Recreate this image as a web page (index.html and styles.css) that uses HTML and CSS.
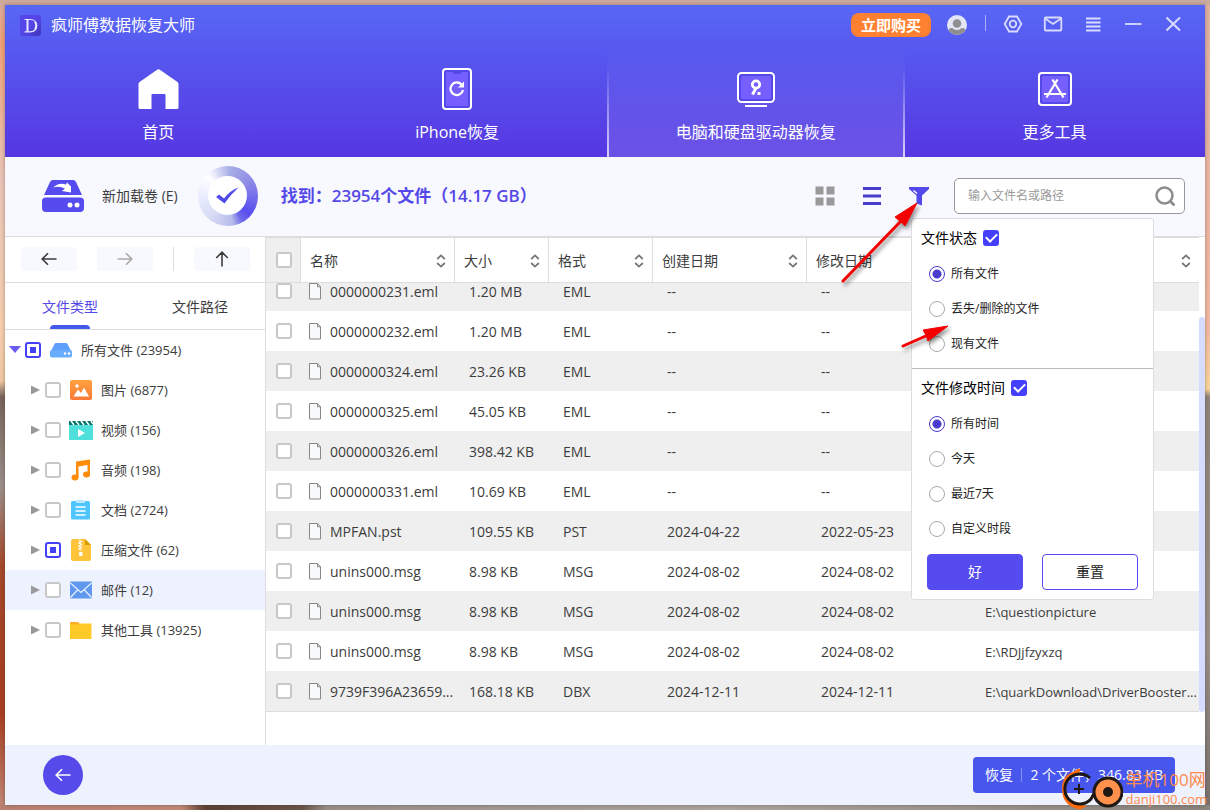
FILE: index.html
```html
<!DOCTYPE html>
<html lang="zh-CN">
<head>
<meta charset="utf-8">
<meta name="viewport" content="width=device-width, initial-scale=1">
<title>疯师傅数据恢复大师</title>
<link rel="stylesheet" href="styles.css">
</head>
<body>
<svg class="defs" aria-hidden="true">
  <symbol id="sort" viewBox="0 0 10 14"><path d="M1.2 5 5 1.4 8.8 5M1.2 9 5 12.6 8.8 9" fill="none" stroke="#777" stroke-width="1.8"/></symbol>
  <symbol id="file" viewBox="0 0 12 17"><path d="M.5.5H8.5L11.5 3.8V16H.5Z" fill="#f8f9fb" stroke="#888"/><path d="M8.5.5V3.8H11.5" fill="none" stroke="#888"/></symbol>
  <symbol id="arrow" viewBox="0 0 16 14"><path d="M15.5 7H1.5M7 1.2 1.2 7 7 12.8" fill="none" stroke="currentColor" stroke-width="1.6"/></symbol>
</svg>
<div class="window">
  <header class="header">
    <div class="titlebar">
      <svg class="logo" viewBox="0 0 21 21"><defs><linearGradient id="lg" x1="0" y1="0" x2="1" y2="1"><stop offset=".5" stop-color="#5546ea"/><stop offset="1" stop-color="#4034b4"/></linearGradient></defs><rect width="21" height="21" rx="3" fill="url(#lg)"/><path d="M4.500 4.500H10C14.500 4.500 16.500 7 16.500 10.500S14.500 16.800 10 16.800H4.500" fill="none" stroke="#e9e6ff" stroke-width="1.200"/><path d="M7.500 4.500V16.800M15 7Q17.500 10.500 15 14.500" fill="none" stroke="#e9e6ff" stroke-width="2"/></svg>
      <h1 class="app-name">疯师傅数据恢复大师</h1>
      <button class="buy">立即购买</button>
      <button class="avatar" aria-label="账户"><svg viewBox="0 0 20 20"><defs><clipPath id="ac"><circle cx="10" cy="10" r="10"/></clipPath></defs><g clip-path="url(#ac)"><rect width="20" height="20" fill="#e3e6f6"/><circle cx="10" cy="8.500" r="4.300" fill="#8f8f91"/><path d="M0 20C1 13 4 12.500 6 13.500Q10 16.500 14 13.500C16 12.500 19 13 20 20Z" fill="#8f8f91"/></g></svg></button>
      <span class="title-sep"></span>
      <div class="win-tools">
        <button aria-label="设置"><svg viewBox="0 0 24 24"><path d="M8 4.500H16L20.300 12 16 19.500H8L3.700 12Z"/><circle cx="12" cy="12" r="3.300"/></svg></button>
        <button aria-label="邮件"><svg viewBox="0 0 24 24"><rect x="3.800" y="5.500" width="16.500" height="13" rx="1"/><path d="M4 6.500 12 12 20 6.500"/></svg></button>
        <button aria-label="菜单"><svg viewBox="0 0 24 24"><path d="M5 6.500H19.500M5 10.500H19.500M5 14.500H19.500M5 18.500H19.500"/></svg></button>
        <button aria-label="最小化"><svg viewBox="0 0 24 24"><path d="M4 12H20.500"/></svg></button>
        <button aria-label="关闭"><svg viewBox="0 0 24 24"><path d="M5.500 5.500 19 18.500M19 5.500 5.500 18.500" stroke-width="2"/></svg></button>
      </div>
    </div>
    <nav class="main-tabs">
      <a class="main-tab" href="#"><span class="tab-icon"><svg width="42" height="42" viewBox="0 0 42 42"><path d="M20.500 1.500Q21.500.8 22.500 1.500L40.500 14Q41.500 15 41.500 16V39.500Q41.500 41 40 41H28.500V27Q28.500 26 27.500 26H15.500Q14.500 26 14.500 27V41H3Q1.500 41 1.500 39.500V16Q1.500 15 2.500 14Z" fill="#fff"/></svg></span>首页</a>
      <a class="main-tab" href="#"><span class="tab-icon"><svg width="30" height="42" viewBox="0 0 30 42"><rect x="1" y="1" width="28" height="40" rx="3" fill="#5548e8" stroke="#fff" stroke-width="2"/><path d="M4 4H10L12 6H18L20 4H26V38H4Z" fill="#765fff"/><path d="M19.500 16.500A6.300 6.300 0 1 0 21 22" fill="none" stroke="#fff" stroke-width="2.200"/><path d="M22 13.500V19.500H16Z" fill="#fff"/></svg></span>iPhone恢复</a>
      <a class="main-tab active" href="#"><span class="tab-icon"><svg width="38" height="35" viewBox="0 0 38 35"><rect x="1" y="1" width="36" height="29" rx="3.500" fill="#5548e8" stroke="#fff" stroke-width="2"/><rect x="4" y="4" width="30" height="23" rx="1" fill="#765fff"/><circle cx="19" cy="12.500" r="3.700" fill="none" stroke="#fff" stroke-width="2.800"/><path d="M19 16 15.500 22.500" stroke="#fff" stroke-width="3"/><rect x="20.500" y="20" width="3" height="3" fill="#fff"/><path d="M8 34H30" stroke="#fff" stroke-width="2"/></svg></span>电脑和硬盘驱动器恢复</a>
      <a class="main-tab" href="#"><span class="tab-icon"><svg width="34" height="34" viewBox="0 0 34 34"><rect x="1" y="1" width="32" height="32" rx="3" fill="#5548e8" stroke="#fff" stroke-width="2"/><rect x="4" y="4" width="26" height="26" rx="1" fill="#765fff"/><path d="M14.500 7.500 25.500 25.500M19.500 7.500 8.500 25.500M6 22H28" fill="none" stroke="#fff" stroke-width="2.200"/></svg></span>更多工具</a>
    </nav>
  </header>

  <section class="toolbar">
    <svg class="drive" viewBox="0 0 42 32"><path d="M11 0H31Q33 0 34 2L40 15H2L8 2Q9 0 11 0ZM4 17.500H38Q42 17.500 42 21V28Q42 32 38 32H4Q0 32 0 28V21Q0 17.500 4 17.500Z" fill="#564bee"/><path d="M11 7.500Q17 2 24 4.500L25 2.500 29 6.500V12.500L20 11 23 8.500Q17 5.500 11 7.500Z" fill="#fff"/><circle cx="28" cy="25" r="2.500" fill="#fff"/><circle cx="35" cy="25" r="2.500" fill="#fff"/></svg>
    <span class="drive-name">新加载卷 (E)</span>
    <div class="ring"><svg viewBox="0 0 39 39"><circle cx="19.500" cy="19.500" r="19.500" fill="#fff"/><path d="M8 21 11 18.500 16 22.500Q22 14.500 30.500 11.500Q22 19 16.500 27.500Z" fill="#5149ea"/></svg></div>
    <strong class="found">找到：23954个文件（14.17 GB）</strong>
    <div class="views">
      <button aria-label="网格视图"><svg viewBox="0 0 20 20"><path d="M.5.5h8v8h-8zM11.500.5h8v8h-8zM.5 11.500h8v8h-8zM11.500 11.500h8v8h-8z" fill="#999"/></svg></button>
      <button aria-label="列表视图"><svg viewBox="0 0 20 20"><path d="M1 2.500H19M1 10H19M1 17.500H19" stroke="#4a3ccc" stroke-width="3"/></svg></button>
      <button aria-label="筛选"><svg viewBox="0 0 20 20"><path d="M0 1H20V3L13 9.500V19.500L7.500 17.500V9.500L0 3Z" fill="#5349e8"/><path d="M4.500 4.500 8 7.500" stroke="#fff" stroke-width="1.400"/></svg></button>
    </div>
    <label class="search"><input type="search" aria-label="搜索" placeholder="输入文件名或路径"><svg viewBox="0 0 20 20"><circle cx="9.500" cy="9.500" r="8" fill="none" stroke="#8c8c8c" stroke-width="2.500"/><path d="M15 15 19.500 19.500" stroke="#8c8c8c" stroke-width="2.800"/></svg></label>
  </section>

  <main class="content">
    <aside class="sidebar">
      <div class="history">
        <button aria-label="后退"><svg width="16" height="14"><use href="#arrow"/></svg></button>
        <button class="faded" aria-label="前进"><svg class="right" width="16" height="14"><use href="#arrow"/></svg></button>
        <span class="history-sep"></span>
        <button aria-label="向上"><svg class="up" width="16" height="14"><use href="#arrow"/></svg></button>
      </div>
      <div class="side-tabs" role="tablist">
        <button class="side-tab on" role="tab" aria-selected="true">文件类型</button>
        <button class="side-tab" role="tab" aria-selected="false">文件路径</button>
      </div>
      <ul class="tree">
        <li class="node root"><svg class="caret" viewBox="0 0 12 12"><path d="M0 2H12L6 9Z" fill="#6a5cf2"/></svg><input class="check partial" type="checkbox" id="t0"><svg class="kind" viewBox="0 0 24 24"><path d="M7 5H17Q18 5 18.500 6L22 13H2L5.500 6Q6 5 7 5Z" fill="#5d9ffb"/><rect x="1" y="12" width="22" height="7.500" rx="2" fill="#69adff"/><circle cx="16" cy="15.500" r="1.200" fill="#fff"/><circle cx="20" cy="15.500" r="1.200" fill="#fff"/></svg><label for="t0">所有文件 (23954)</label></li>
        <li class="node"><svg class="caret" viewBox="0 0 12 12"><path d="M2 1.500V10.500L11 6Z" fill="#999"/></svg><input class="check" type="checkbox" id="t1"><svg class="kind" viewBox="0 0 24 24"><defs><linearGradient id="og" x2="0" y2="1"><stop stop-color="#ffa23f"/><stop offset="1" stop-color="#f87838"/></linearGradient></defs><rect x="1" y="2" width="22" height="20" rx="2" fill="url(#og)"/><path d="M4.500 18.500 9 11.500 12 15 15 9.500 20 18.500Z" fill="#fff"/><circle cx="8" cy="8" r="1.700" fill="#fff"/></svg><label for="t1">图片 (6877)</label></li>
        <li class="node"><svg class="caret" viewBox="0 0 12 12"><path d="M2 1.500V10.500L11 6Z" fill="#999"/></svg><input class="check" type="checkbox" id="t2"><svg class="kind" viewBox="0 0 24 24"><rect y="3" width="24" height="19" rx="1" fill="#50e0dc"/><path d="M0 3H24V7H0Z" fill="#08756f"/><path d="M2 3 5 7M7 3 10 7M12 3 15 7M17 3 20 7M22 3 24 6" stroke="#fff" stroke-width="1.500"/><path d="M9 11V19L16 15Z" fill="#fff"/></svg><label for="t2">视频 (156)</label></li>
        <li class="node"><svg class="caret" viewBox="0 0 12 12"><path d="M2 1.500V10.500L11 6Z" fill="#999"/></svg><input class="check" type="checkbox" id="t3"><svg class="kind" viewBox="0 0 24 24"><path d="M7 3.500 21 1.500V16.500H18.500V7L9.500 8.500V19.500H7Z" fill="#ff8c0a"/><ellipse cx="6" cy="19.500" rx="3.500" ry="3" fill="#ff8c0a"/><ellipse cx="17.500" cy="16.500" rx="3.500" ry="3" fill="#ff8c0a"/></svg><label for="t3">音频 (198)</label></li>
        <li class="node"><svg class="caret" viewBox="0 0 12 12"><path d="M2 1.500V10.500L11 6Z" fill="#999"/></svg><input class="check" type="checkbox" id="t4"><svg class="kind" viewBox="0 0 24 24"><rect x="2" y="3" width="19" height="18.500" rx="1.500" fill="#4fc5ff"/><rect x="7" y="2" width="9" height="3" rx="1" fill="#bce9ff"/><path d="M6.500 9H16.500M6.500 13H16.500M6.500 17H16.500" stroke="#fff" stroke-width="1.600"/></svg><label for="t4">文档 (2724)</label></li>
        <li class="node"><svg class="caret" viewBox="0 0 12 12"><path d="M2 1.500V10.500L11 6Z" fill="#999"/></svg><input class="check partial" type="checkbox" id="t5"><svg class="kind" viewBox="0 0 24 24"><path d="M4 1H16L22 7V21Q22 23 20 23H4Q2 23 2 21V3Q2 1 4 1Z" fill="#ffc43a"/><path d="M16 1 22 7H16Z" fill="#d99a00"/><path d="M10 2 12.500 3.500 10 5 12.500 6.500 10 8 12.500 9.500 10 11 12.500 12.500" fill="none" stroke="#fff" stroke-width="1.300"/><rect x="10" y="14" width="3.500" height="4" rx="1" fill="#fff"/></svg><label for="t5">压缩文件 (62)</label></li>
        <li class="node picked"><svg class="caret" viewBox="0 0 12 12"><path d="M2 1.500V10.500L11 6Z" fill="#999"/></svg><input class="check" type="checkbox" id="t6"><svg class="kind" viewBox="0 0 24 24"><rect x="1" y="3.500" width="22" height="17" rx="1" fill="#5f98ee"/><path d="M1.500 5 12 14.500 22.500 5M1.500 19.500 8.500 12M22.500 19.500 15.500 12" fill="none" stroke="#e8f0ff" stroke-width="1.200"/></svg><label for="t6">邮件 (12)</label></li>
        <li class="node"><svg class="caret" viewBox="0 0 12 12"><path d="M2 1.500V10.500L11 6Z" fill="#999"/></svg><input class="check" type="checkbox" id="t7"><svg class="kind" viewBox="0 0 24 24"><path d="M1 4H9L12 7V10H1Z" fill="#ffac26"/><path d="M1 6.500H9.500L11 5.500H22.500V21H1Z" fill="#ffca28"/></svg><label for="t7">其他工具 (13925)</label></li>
      </ul>
    </aside>

    <div class="list">
      <table class="files">
        <colgroup><col class="c-check"><col class="c-name"><col class="c-size"><col class="c-type"><col class="c-date"><col class="c-mod"><col></colgroup>
        <thead><tr>
          <th class="pick"><input class="check" type="checkbox" aria-label="全选"></th>
          <th><span class="head">名称<svg><use href="#sort"/></svg></span></th>
          <th><span class="head">大小<svg><use href="#sort"/></svg></span></th>
          <th><span class="head">格式<svg><use href="#sort"/></svg></span></th>
          <th><span class="head">创建日期<svg><use href="#sort"/></svg></span></th>
          <th><span class="head">修改日期<svg><use href="#sort"/></svg></span></th>
          <th aria-label="路径"><span class="head end"><svg><use href="#sort"/></svg></span></th>
        </tr></thead>
        <tbody>
          <tr class="cut"><td class="pick"><input class="check" type="checkbox" aria-label="0000000231.eml"></td><td class="name"><svg><use href="#file"/></svg>0000000231.eml</td><td>1.20 MB</td><td>EML</td><td>--</td><td>--</td><td class="path"></td></tr>
          <tr><td class="pick"><input class="check" type="checkbox" aria-label="0000000232.eml"></td><td class="name"><svg><use href="#file"/></svg>0000000232.eml</td><td>1.20 MB</td><td>EML</td><td>--</td><td>--</td><td class="path"></td></tr>
          <tr><td class="pick"><input class="check" type="checkbox" aria-label="0000000324.eml"></td><td class="name"><svg><use href="#file"/></svg>0000000324.eml</td><td>23.26 KB</td><td>EML</td><td>--</td><td>--</td><td class="path"></td></tr>
          <tr><td class="pick"><input class="check" type="checkbox" aria-label="0000000325.eml"></td><td class="name"><svg><use href="#file"/></svg>0000000325.eml</td><td>45.05 KB</td><td>EML</td><td>--</td><td>--</td><td class="path"></td></tr>
          <tr><td class="pick"><input class="check" type="checkbox" aria-label="0000000326.eml"></td><td class="name"><svg><use href="#file"/></svg>0000000326.eml</td><td>398.42 KB</td><td>EML</td><td>--</td><td>--</td><td class="path"></td></tr>
          <tr><td class="pick"><input class="check" type="checkbox" aria-label="0000000331.eml"></td><td class="name"><svg><use href="#file"/></svg>0000000331.eml</td><td>10.69 KB</td><td>EML</td><td>--</td><td>--</td><td class="path"></td></tr>
          <tr><td class="pick"><input class="check" type="checkbox" aria-label="MPFAN.pst"></td><td class="name"><svg><use href="#file"/></svg>MPFAN.pst</td><td>109.55 KB</td><td>PST</td><td>2024-04-22</td><td>2022-05-23</td><td class="path"></td></tr>
          <tr><td class="pick"><input class="check" type="checkbox" aria-label="unins000.msg"></td><td class="name"><svg><use href="#file"/></svg>unins000.msg</td><td>8.98 KB</td><td>MSG</td><td>2024-08-02</td><td>2024-08-02</td><td class="path"></td></tr>
          <tr><td class="pick"><input class="check" type="checkbox" aria-label="unins000.msg"></td><td class="name"><svg><use href="#file"/></svg>unins000.msg</td><td>8.98 KB</td><td>MSG</td><td>2024-08-02</td><td>2024-08-02</td><td class="path">E:\questionpicture</td></tr>
          <tr><td class="pick"><input class="check" type="checkbox" aria-label="unins000.msg"></td><td class="name"><svg><use href="#file"/></svg>unins000.msg</td><td>8.98 KB</td><td>MSG</td><td>2024-08-02</td><td>2024-08-02</td><td class="path">E:\RDJjfzyxzq</td></tr>
          <tr><td class="pick"><input class="check" type="checkbox" aria-label="9739F396A23659"></td><td class="name"><svg><use href="#file"/></svg>9739F396A23659...</td><td>168.18 KB</td><td>DBX</td><td>2024-12-11</td><td>2024-12-11</td><td class="path">E:\quarkDownload\DriverBooster...</td></tr>
        </tbody>
      </table>
      <div class="scroll"><div class="thumb"></div></div>
    </div>
  </main>

  <footer class="footer">
    <button class="back" aria-label="返回"><svg width="16" height="14"><use href="#arrow"/></svg></button>
    <button class="recover"><span>恢复</span><span class="bar"></span><span>2 个文件，346.83 KB</span></button>
  </footer>

  <form class="filter">
    <div class="group">
      <div class="group-title"><label for="fs">文件状态</label><input class="tick" type="checkbox" id="fs" checked></div>
      <label class="option"><input type="radio" name="state" checked>所有文件</label>
      <label class="option"><input type="radio" name="state">丢失/删除的文件</label>
      <label class="option"><input type="radio" name="state">现有文件</label>
    </div>
    <div class="group">
      <div class="group-title"><label for="ft">文件修改时间</label><input class="tick" type="checkbox" id="ft" checked></div>
      <label class="option"><input type="radio" name="time" checked>所有时间</label>
      <label class="option"><input type="radio" name="time">今天</label>
      <label class="option"><input type="radio" name="time">最近7天</label>
      <label class="option"><input type="radio" name="time">自定义时段</label>
      <div class="actions"><button type="button" class="ok">好</button><button type="button" class="reset">重置</button></div>
    </div>
  </form>

  <svg class="pointers" viewBox="0 0 120 160" aria-hidden="true"><g stroke="#f40000" stroke-width="3" stroke-linecap="round"><path d="M3 79 61 19M63 144 88 133"/></g><path d="M77 1 55 15 60 19 65 24ZM108 124 83 128 86 133 88 139Z" fill="#f40000" stroke="#f40000"/></svg>
</div>

<div class="mark">
  <svg viewBox="0 0 62 42" aria-hidden="true"><path d="M14 3Q1 7 1 21Q1 38 19 41.500L26 38Q6 37 5 21Q5 8 15 6Q20 5 19 1Q17 0 14 3Z" fill="#ff6a0a"/><path d="M29 10A15 15 0 1 0 30 31L35 22" fill="none" stroke="#1e1712" stroke-width="3"/><path d="M18 16V26M13 21H23" stroke="#1e1712" stroke-width="2"/><circle cx="47" cy="24" r="14" fill="#ff914d" stroke="#1e1712" stroke-width="3"/><circle cx="47" cy="24" r="5" fill="#1e1712"/></svg>
  <div class="mark-text"><span class="mark-name">单机100网</span><span class="mark-site">danji100.com</span></div>
</div>
</body>
</html>
```
FILE: styles.css
```css
* { box-sizing: border-box; }

body {
  margin: 0;
  min-height: 100vh;
  padding: 5px;
  display: flex;
  position: relative;
  font: 14px/20px "Open Sans", "Noto Sans CJK SC", sans-serif;
  color: #3c3c3c;
  background:
    linear-gradient(90deg, #b98272, #c08a78 15%, #5b4035 17%, #6b5548 25%, #99908a 27%, #aaa4a0 60%, #8a8580) bottom / 100% 5px no-repeat,
    linear-gradient(90deg, #cfa99c, #cbaa9f) top / 100% 5px no-repeat,
    linear-gradient(#d6aea0, #f0a078 5%, #e9c5b8 22%, #f5cfae 41%, #f0c9a4 47%, #77655c 49%, #9a8f89 60%, #a5482a 70%, #a83e20 88%, #c08a78) left / 5px 100% no-repeat,
    linear-gradient(#e0b3a3, #f2b9a5 40%, #fbd79c 48%, #8f837b 49%, #9b9089 80%, #77706c) right / 5px 100% no-repeat,
    #a59a94;
}

button, input { font: inherit; color: inherit; margin: 0; }
button { border: 0; padding: 0; background: none; cursor: pointer; }
svg { display: block; }
.defs { position: absolute; width: 0; height: 0; }

.window {
  position: relative;
  flex: 1;
  min-width: 0;
  display: flex;
  flex-direction: column;
  background: #fff;
  box-shadow: 0 0 4px rgba(60, 40, 30, .4);
}

.header { background: linear-gradient(#5767f5, #5637e2); color: #fff; }
.titlebar { display: flex; align-items: center; height: 40px; padding: 0 20px 0 15px; }
.logo { width: 21px; height: 21px; }
.app-name { margin: 0 auto 0 10px; font-size: 16px; font-weight: 400; line-height: 20px; }
.buy { width: 80px; height: 24px; border-radius: 8px; background: #ff8030; font-size: 15px; font-weight: 700; line-height: 24px; }
.avatar { width: 20px; height: 20px; margin-left: 16px; }
.title-sep { width: 1px; height: 16px; margin: 0 15px 4px 18px; background: #aab0fa; }
.win-tools { display: flex; gap: 16px; padding-bottom: 3px; }
.win-tools svg { width: 24px; height: 24px; fill: none; stroke: #d9dcff; stroke-width: 1.8; }

.main-tabs { display: grid; grid-template-columns: repeat(4, 1fr); padding: 0 1px 0 4px; }
.main-tab {
  display: flex;
  flex-direction: column;
  align-items: center;
  gap: 11px;
  padding: 22px 0 15px;
  color: #fff;
  font-size: 16px;
  line-height: 20px;
  text-decoration: none;
}
.tab-icon { display: flex; align-items: center; height: 44px; }
.main-tab.active {
  background:
    linear-gradient(rgba(255, 255, 255, 0) 20%, #d8d0fa) left / 2px 100% no-repeat,
    linear-gradient(rgba(255, 255, 255, 0) 20%, #d8d0fa) right / 2px 100% no-repeat,
    linear-gradient(rgba(255, 255, 255, 0), rgba(255, 255, 255, .13));
}

.toolbar { display: flex; align-items: center; height: 80px; padding: 0 20px 2px 37px; background: #f8f9fe; border-bottom: 1px solid #ddd; }
.drive { width: 42px; height: 32px; }
.drive-name { margin: 0 20px 0 18px; }
.ring {
  display: grid;
  place-items: center;
  width: 60px;
  height: 60px;
  border-radius: 50%;
  background: conic-gradient(from 315deg, #fff, #a6ace6 50deg, #9290e6 95deg, #584df0 175deg, #6e68ea 195deg, #b5bbea 215deg, #d5d9f4 260deg, #e6ebfd 310deg, #fff);
}
.ring svg { width: 39px; height: 39px; }
.found { margin: 0 auto 0 23px; font-size: 17px; font-weight: 600; color: #5548e8; }
.views { display: flex; gap: 27px; margin-right: 25px; }
.views svg { width: 20px; height: 20px; }
.search { display: flex; align-items: center; width: 231px; height: 36px; padding: 0 9px 0 13px; border: 1px solid #999; border-radius: 5px; background: #fff; }
.search input { flex: 1; min-width: 0; padding: 0; border: 0; outline: 0; background: none; font-size: 12px; }
.search input::placeholder { color: #999; opacity: 1; }
.search svg { width: 20px; height: 20px; }

.content { flex: 1; display: flex; min-height: 0; }
.sidebar { flex: none; width: 261px; border-right: 1px solid #ddd; }
.history { display: flex; align-items: center; gap: 20px; height: 46px; padding: 0 15px 1px 16px; border-bottom: 1px solid #ddd; }
.history button { display: grid; place-items: center; width: 56px; height: 24px; border-radius: 3px; background: #f8f9fe; }
.history .faded { color: #aaa; }
.history-sep { width: 1px; height: 24px; background: #ddd; }
.right { transform: rotate(180deg); }
.up { transform: rotate(90deg); }
.side-tabs { display: grid; grid-template-columns: 1fr 1fr; height: 47px; border-bottom: 1px solid #ddd; }
.side-tab { position: relative; padding-top: 2px; }
.side-tab.on { color: #5548e8; }
.side-tab.on::after { content: ""; position: absolute; left: 50%; bottom: 0; width: 40px; height: 4px; margin-left: -20px; border-radius: 4px 4px 0 0; background: #4458ea; }

.tree { margin: 0; padding: 0; list-style: none; font-size: 13px; }
.node { display: flex; align-items: center; height: 40px; padding-left: 24px; }
.node.root { padding-left: 4px; }
.node.picked { background: #eef2ff; }
.caret { width: 12px; height: 12px; margin-right: 4px; }
.kind { width: 24px; height: 24px; margin: 0 8px; }

.check { appearance: none; display: block; flex: none; width: 16px; height: 16px; border: 2px solid #c8c8c8; border-radius: 3px; background: #fff; }
.check.partial { border-color: #4440f5; background: linear-gradient(#4440f5, #4440f5) center / 6px 6px no-repeat #fff; }

.list { flex: 1; min-width: 0; display: flex; }
.files { flex: 1; width: 100%; min-width: 0; align-self: flex-start; table-layout: fixed; border-collapse: separate; border-spacing: 0; border-bottom: 1px solid #ddd; }
.c-check { width: 35px; }
.c-name, .c-date { width: 154px; }
.c-size { width: 94px; }
.c-type { width: 104px; }
.c-mod { width: 164px; }
.files th { height: 46px; padding: 1px 8px 0 9px; border-top: 1px solid #ddd; border-right: 1px solid #ddd; border-bottom: 1px solid #ddd; font-weight: 400; text-align: left; }
.files th:last-child { border-right: 0; }
.files th.pick { padding: 0 0 1px 10px; background: #efefef; }
.head { display: flex; align-items: center; justify-content: space-between; }
.head.end { justify-content: flex-end; }
.head svg { width: 10px; height: 14px; }
.files td { height: 40px; padding: 1px 0 0 14px; overflow: hidden; white-space: nowrap; }
.files td.pick { padding: 0 0 0 10px; }
.files td.path { font-size: 13px; }
.name svg { display: inline-block; width: 12px; height: 17px; margin-right: 9px; margin-left: -6px; vertical-align: -3px; }
.files tbody tr:nth-child(odd) { background: #efefef; }
.files .cut td { height: 28px; padding-top: 0; line-height: 18px; vertical-align: top; }
.scroll { width: 6px; padding: 80px 0 33px; display: flex; }
.thumb { flex: 1; border-radius: 3px; background: #d6dcff; }

.footer { display: flex; align-items: center; justify-content: space-between; height: 60px; padding: 0 30px 0 38px; background: #eef2ff; }
.back { display: grid; place-items: center; width: 40px; height: 40px; border-radius: 50%; background: #564aeb; color: #fff; }
.recover { display: flex; align-items: center; justify-content: space-between; width: 202px; height: 36px; padding: 0 12px; border-radius: 4px; background: #4757ee; color: #fff; }
.bar { width: 1px; height: 14px; background: #8490f5; }

.filter { position: absolute; top: 213px; right: 51px; width: 243px; border: 1px solid #ddd; border-radius: 3px; background: #fff; color: #222; }
.group { padding: 0 9px 7px; }
.group + .group { padding-bottom: 9px; border-top: 1px solid #bbb; }
.group-title { display: flex; align-items: center; gap: 6px; height: 37px; color: #000; }
.tick { appearance: none; display: grid; place-items: center; width: 16px; height: 16px; border-radius: 3px; background: #443ffa; }
.tick:checked::before { content: ""; width: 5px; height: 9px; margin-bottom: 3px; border: solid #fff; border-width: 0 2px 2px 0; transform: rotate(45deg); }
.option { display: flex; align-items: center; gap: 6px; height: 35px; padding-left: 8px; font-size: 12px; }
.option input { appearance: none; width: 16px; height: 16px; border: 1px solid #aaa; border-radius: 50%; background: #fff; }
.option input:checked { border-color: #4a3ccc; background: radial-gradient(circle, #4a3ccc 4px, #fff 5px); }
.actions { display: flex; justify-content: space-between; padding: 8px 6px 0; }
.actions button { width: 96px; height: 36px; border: 1px solid #564bee; border-radius: 4px; }
.actions .ok { background: #564bee; color: #fff; }

.pointers { position: absolute; left: 835px; top: 197px; width: 120px; height: 160px; filter: drop-shadow(2px 3px 2px rgba(0, 0, 0, .45)); pointer-events: none; }

.mark { position: absolute; right: 3px; bottom: 0; display: flex; align-items: center; gap: 2px; color: #ff8a4a; }
.mark svg { width: 62px; height: 42px; }
.mark-text { display: flex; flex-direction: column; }
.mark-name { font-size: 17px; line-height: 20px; }
.mark-site { font-size: 13px; line-height: 18px; }
```
